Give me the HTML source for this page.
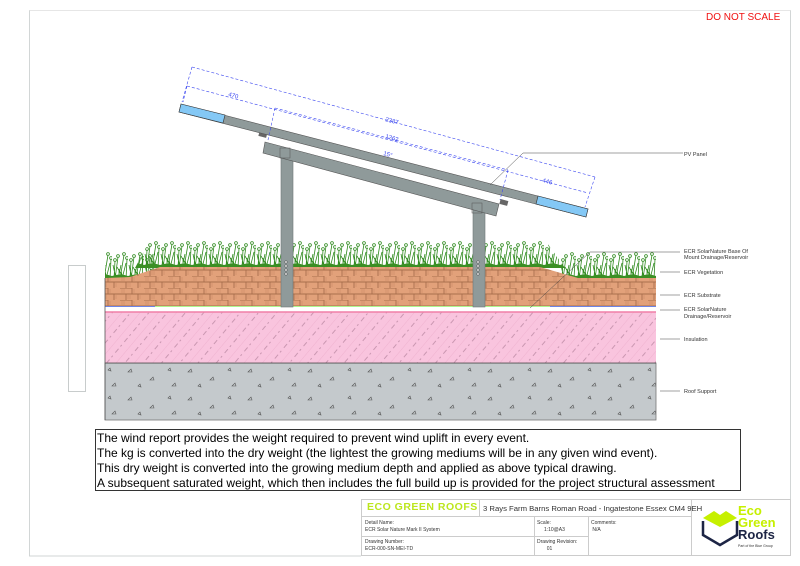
<!DOCTYPE html>
<html><head><meta charset="utf-8"><style>
html,body{margin:0;padding:0;background:#fff;}
body{width:800px;height:566px;position:relative;overflow:hidden;font-family:"Liberation Sans",sans-serif;}
.abs{position:absolute;}
</style></head><body>
<svg class="abs" style="left:0;top:0" width="800" height="566" viewBox="0 0 800 566">
<defs>
<pattern id="brick" width="24" height="12" patternUnits="userSpaceOnUse">
<rect width="24" height="12" fill="#e2a17a"/>
<path d="M0 0h12v6h12M0 6h6v6M12 0v6M6 6h12v6M18 6v6" stroke="#a86e4c" stroke-width="0.9" fill="none"/>
<path d="M2 1v4M4 1v4M8 7v4M10 7v4M14 1v4M20 7v4" stroke="#c68460" stroke-width="0.5"/>
</pattern>
<pattern id="hatch" width="14" height="14" patternUnits="userSpaceOnUse" patternTransform="rotate(-50)">
<rect width="14" height="14" fill="#f9c4de"/>
<path d="M0 7h5M8 7h2" stroke="#9b6a84" stroke-width="0.6"/>
<path d="M0 0h14" stroke="#e9a6c6" stroke-width="0.6"/>
</pattern>
<pattern id="conc" width="60" height="28" patternUnits="userSpaceOnUse">
<rect width="60" height="28" fill="#c4c9cc"/>
<path d="M8 8l3-3 1 3zM30 16l3-3 1 3zM48 6l2-2 1 3zM18 22l2-2 1 3zM52 22l3-3 1 3z" fill="none" stroke="#555" stroke-width="0.6"/>
</pattern>
<g id="tuft">
<path d="M2 28 L3 10 M3 28 L6 6 M6 28 L9 14 M8 28 L12 4 M10 28 L14 12 M12 28 L5 16 M14 28 L15 8 M4 28 L1 14 M7 28 L7 18 M11 28 L9 20" stroke="#2f8a1e" stroke-width="0.8" fill="none"/>
<circle cx="3" cy="9" r="1.4" fill="none" stroke="#2f8a1e" stroke-width="0.8"/>
<circle cx="6" cy="5" r="1.4" fill="none" stroke="#2f8a1e" stroke-width="0.8"/>
<circle cx="12" cy="3" r="1.4" fill="none" stroke="#2f8a1e" stroke-width="0.8"/>
<circle cx="15" cy="7" r="1.4" fill="none" stroke="#2f8a1e" stroke-width="0.8"/>
<path d="M0 28 L16 28 L16 25 Q8 22 0 25Z" fill="#3a8f24"/>
</g>
<pattern id="grass" x="0" y="240" width="16" height="28" patternUnits="userSpaceOnUse"><use href="#tuft"/></pattern>
<pattern id="grass2" x="0" y="251" width="16" height="28" patternUnits="userSpaceOnUse"><use href="#tuft"/></pattern>
</defs>
<path d="M29.5 556V10.5H790.5V556" fill="none" stroke="#d2d6d6" stroke-width="1"/>
<path d="M29.5 10.5H790.5" stroke="#e6e6e6"/>
<line x1="29" y1="556" x2="361" y2="556" stroke="#d0d4d4"/>
<rect x="68.5" y="265.5" width="17" height="126" fill="#fff" stroke="#c8cccc"/>
<rect x="105" y="363" width="551" height="57" fill="url(#conc)" stroke="#777" stroke-width="0.8"/>
<rect x="105" y="312" width="551" height="51" fill="url(#hatch)"/>
<line x1="105" y1="363" x2="656" y2="363" stroke="#444" stroke-width="0.8"/>
<line x1="105" y1="312" x2="656" y2="312" stroke="#f07fa7" stroke-width="1.5"/>
<rect x="105" y="306" width="551" height="4" fill="#fff"/>
<line x1="105" y1="306" x2="656" y2="306" stroke="#7cf04a" stroke-width="1.2"/>
<line x1="105" y1="306" x2="155" y2="306" stroke="#2c3cf0" stroke-width="1.2"/>
<line x1="550" y1="306" x2="656" y2="306" stroke="#2c3cf0" stroke-width="1.2"/>
<rect x="105" y="251" width="50" height="28" fill="url(#grass2)"/>
<rect x="560" y="251" width="96" height="28" fill="url(#grass2)"/>
<path d="M135 268 L150 240 L545 240 L565 268Z" fill="url(#grass)"/>
<path d="M105 306 V278 L130 277 L160 267 L540 267 L578 278 L656 278 V306Z" fill="url(#brick)"/>
<line x1="105" y1="278" x2="105" y2="420" stroke="#555" stroke-width="0.8"/>
<rect x="281" y="150" width="12" height="157" fill="#8f9a9a" stroke="#6f7878" stroke-width="0.6"/>
<rect x="473" y="205" width="12" height="102" fill="#8f9a9a" stroke="#6f7878" stroke-width="0.6"/>
<g fill="#fff" stroke="#333" stroke-width="0.5"><circle cx="286" cy="262" r="1.2"/><circle cx="286" cy="266" r="1.2"/><circle cx="286" cy="270" r="1.2"/><circle cx="286" cy="274" r="1.2"/><circle cx="478" cy="262" r="1.2"/><circle cx="478" cy="266" r="1.2"/><circle cx="478" cy="270" r="1.2"/><circle cx="478" cy="274" r="1.2"/></g>
<polygon points="265,142 499,204 496,216 263,153" fill="#8f9a9a" stroke="#555" stroke-width="0.6"/>
<rect x="280" y="148" width="10" height="10" fill="none" stroke="#555" stroke-width="0.5"/>
<rect x="472" y="203" width="10" height="10" fill="none" stroke="#555" stroke-width="0.5"/>
<rect x="259" y="132" width="8" height="5" fill="#666" transform="rotate(15 263 134)"/>
<rect x="500" y="200" width="8" height="5" fill="#666" transform="rotate(15 504 202)"/>
<polygon points="181,104 588,209 586,217 179,112" fill="#8f9a9a" stroke="#555" stroke-width="0.6"/>
<polygon points="181,104 225,115 223,123 179,112" fill="#84c8f5" stroke="#333" stroke-width="0.6"/>
<polygon points="538,196 588,209 586,217 536,204" fill="#84c8f5" stroke="#333" stroke-width="0.6"/>
<g stroke="#3a46f0" stroke-width="0.6" stroke-dasharray="3,2" fill="none">
<line x1="192" y1="67" x2="595" y2="177"/>
<line x1="187" y1="86" x2="588" y2="193"/>
<line x1="192" y1="67" x2="182" y2="102"/>
<line x1="187" y1="86" x2="183" y2="102"/>
<line x1="275" y1="108" x2="508" y2="170"/>
<line x1="275" y1="108" x2="268" y2="140"/>
<line x1="508" y1="170" x2="500" y2="200"/>
<line x1="595" y1="177" x2="585" y2="207"/>
</g>
<g font-size="6" fill="#3a46f0" font-family="Liberation Sans">
<text x="228" y="96" transform="rotate(15 228 96)">470</text>
<text x="385" y="121" transform="rotate(15 385 121)">2387</text>
<text x="385" y="138" transform="rotate(15 385 138)">1262</text>
<text x="383" y="155" transform="rotate(15 383 155)">15°</text>
<text x="542" y="182" transform="rotate(15 542 182)">446</text>
</g>
<g stroke="#444" stroke-width="0.5" fill="none">
<polyline points="490,185 523,153 683,153"/>
<polyline points="530,308 590,252 680,252"/>
<line x1="660" y1="272" x2="680" y2="272"/>
<line x1="660" y1="295" x2="680" y2="295"/>
<line x1="660" y1="310" x2="680" y2="310"/>
<line x1="660" y1="339" x2="680" y2="339"/>
<line x1="660" y1="391" x2="680" y2="391"/>
</g>
<g font-size="5.5" fill="#333" font-family="Liberation Sans">
<text x="684" y="156">PV Panel</text>
<text x="684" y="253">ECR SolarNature Base Of</text>
<text x="684" y="259">Mount Drainage/Reservoir</text>
<text x="684" y="274">ECR Vegetation</text>
<text x="684" y="297">ECR Substrate</text>
<text x="684" y="311">ECR SolarNature</text>
<text x="684" y="318">Drainage/Reservoir</text>
<text x="684" y="341">Insulation</text>
<text x="684" y="393">Roof Support</text>
</g>
<rect x="95.5" y="429.5" width="645" height="61" fill="#fff" stroke="#333"/>
<rect x="361.5" y="499.5" width="429" height="56" fill="#fff" stroke="#ccc"/>
<line x1="361" y1="516.5" x2="691" y2="516.5" stroke="#ccc"/>
<line x1="361" y1="536.5" x2="588" y2="536.5" stroke="#ccc"/>
<line x1="479.5" y1="500" x2="479.5" y2="516" stroke="#ccc"/>
<line x1="534.5" y1="516" x2="534.5" y2="556" stroke="#ccc"/>
<line x1="588.5" y1="516" x2="588.5" y2="556" stroke="#ccc"/>
<line x1="691.5" y1="500" x2="691.5" y2="556" stroke="#ccc"/>
<path d="M703 518 L714 511 L720 515 L726 511 L737 518 L720 527Z" fill="#c6f000"/>
<path d="M703 521 V535 L720 545 L737 535 V521" fill="none" stroke="#1d2545" stroke-width="2.5"/>
</svg>
<div class="abs" style="left:706px;top:12px;font-size:10px;color:#f01010;">DO NOT SCALE</div>
<div class="abs" style="left:97px;top:431px;font-size:12px;line-height:15px;color:#000;white-space:nowrap;">
The wind report provides the weight required to prevent wind uplift in every event.<br>
The kg is converted into the dry weight (the lightest the growing mediums will be in any given wind event).<br>
This dry weight is converted into the growing medium depth and applied as above typical drawing.<br>
A subsequent saturated weight, which then includes the full build up is provided for the project structural assessment</div>
<div class="abs" style="left:367px;top:501px;font-size:10.5px;font-weight:bold;color:#bce61c;letter-spacing:0.5px;">ECO GREEN ROOFS</div>
<div class="abs" style="left:483px;top:504px;font-size:7.7px;color:#333;white-space:nowrap;">3 Rays Farm Barns Roman Road - Ingatestone Essex CM4 9EH</div>
<div class="abs" style="left:365px;top:520px;font-size:5px;color:#333;line-height:7px;">Detail Name:<br>ECR Solar Nature Mark II System</div>
<div class="abs" style="left:365px;top:539px;font-size:5px;color:#333;line-height:7px;">Drawing Number:<br>ECR-000-SN-MEI-TD</div>
<div class="abs" style="left:537px;top:520px;font-size:5px;color:#333;line-height:7px;">Scale:<br>&nbsp;&nbsp;&nbsp;&nbsp;&nbsp;1:10@A3</div>
<div class="abs" style="left:537px;top:539px;font-size:5px;color:#333;line-height:7px;">Drawing Revision:<br>&nbsp;&nbsp;&nbsp;&nbsp;&nbsp;&nbsp;&nbsp;01</div>
<div class="abs" style="left:591px;top:520px;font-size:5px;color:#333;line-height:7px;">Comments:<br>&nbsp;N/A</div>
<div class="abs" style="left:738px;top:505px;font-size:13px;font-weight:bold;line-height:12px;color:#c6f000;">Eco<br>Green<br><span style="color:#1d2545">Roofs</span></div>
<div class="abs" style="left:738px;top:544px;font-size:3.5px;color:#333;">Part of the Blue Group</div>
</body></html>
